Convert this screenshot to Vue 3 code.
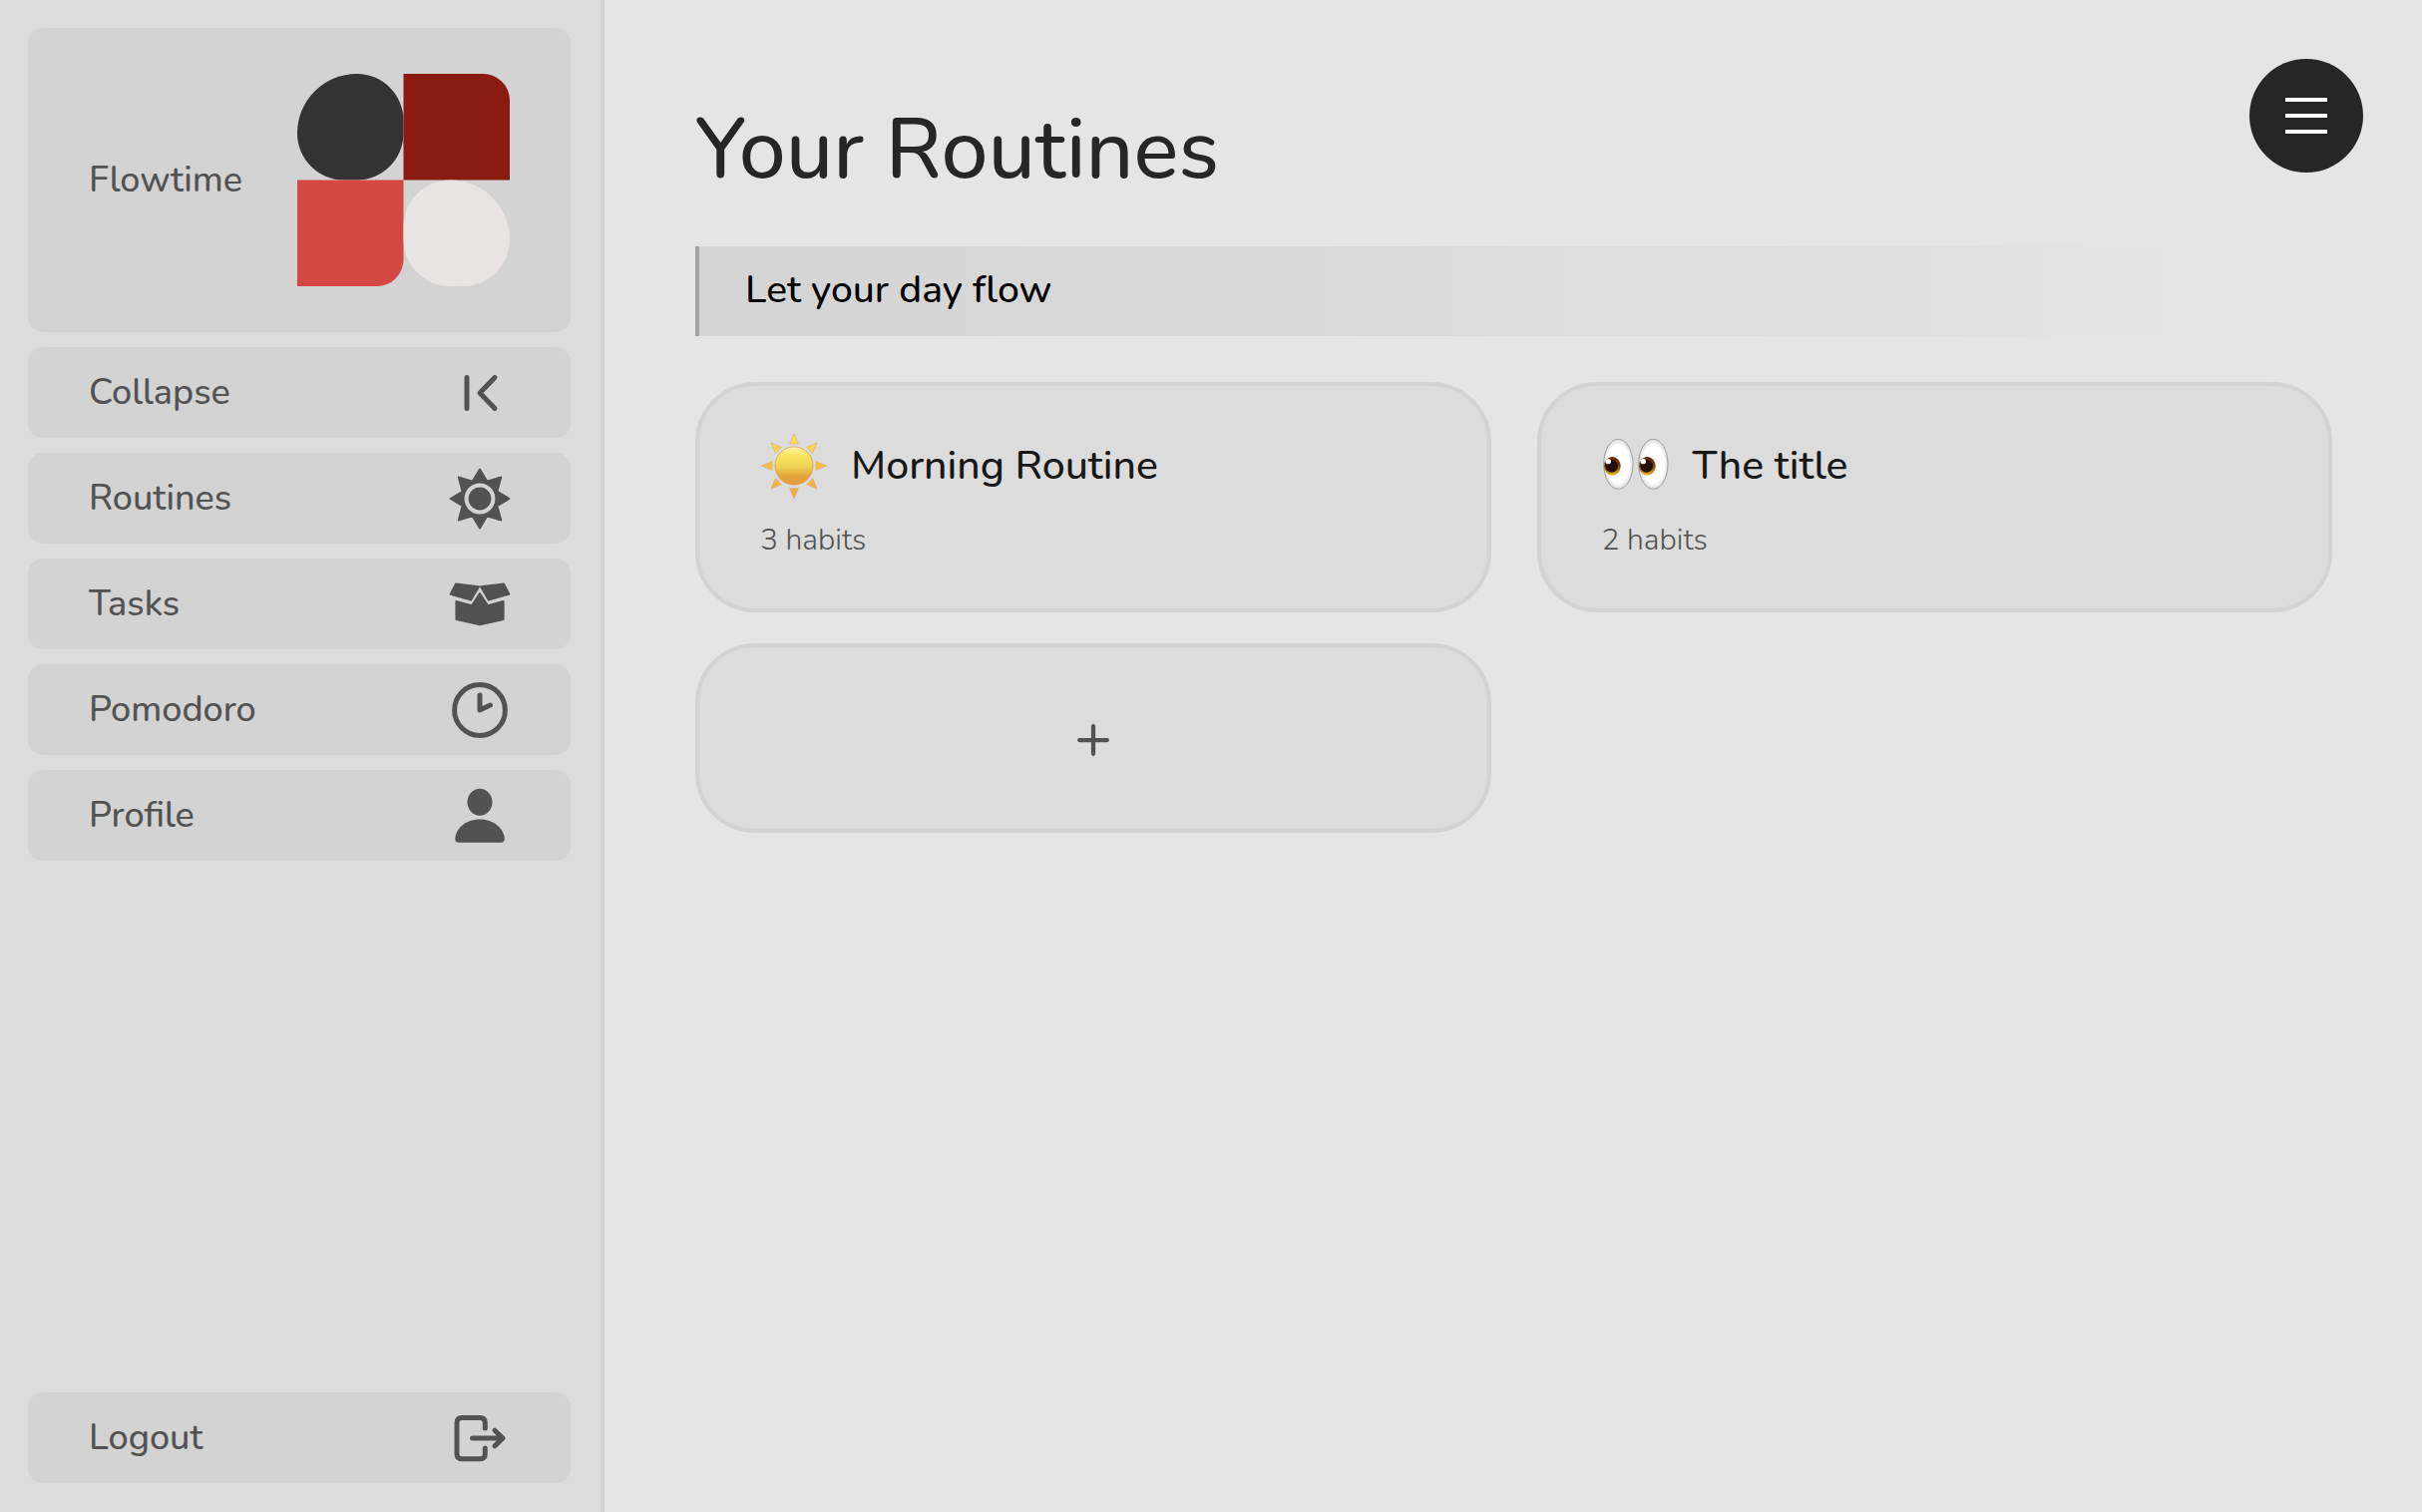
<script setup>
const navItems = [
  { label: 'Collapse', icon: 'collapse', button: true },
  { label: 'Routines', icon: 'sun' },
  { label: 'Tasks', icon: 'box' },
  { label: 'Pomodoro', icon: 'clock' },
  { label: 'Profile', icon: 'person' },
]

const routines = [
  { title: 'Morning Routine', emoji: 'sun', habits: 3 },
  { title: 'The title', emoji: 'eyes', habits: 2 },
]
</script>

<template>
  <div class="app">
    <aside class="sidebar">
      <nav class="nav" aria-label="Main">
        <a class="item brand" href="#">
          <span>Flowtime</span>
          <svg class="logo" viewBox="0 0 214 214" aria-hidden="true">
            <path fill="#333333" d="M60 0A47 47 0 0 1 107 47V60A47 47 0 0 1 60 107H47A47 47 0 0 1 0 60A60 60 0 0 1 60 0Z" />
            <path fill="#8a1b10" d="M107 0H187A27 27 0 0 1 214 27V107H107Z" />
            <path fill="#d34843" d="M0 107H107V187A27 27 0 0 1 80 214H0Z" />
            <path fill="#e8e4e3" d="M154 107A60 60 0 0 1 214 167A47 47 0 0 1 167 214H154A47 47 0 0 1 107 167V154A47 47 0 0 1 154 107Z" />
          </svg>
        </a>

        <component
          :is="item.button ? 'button' : 'a'"
          v-for="item in navItems"
          :key="item.label"
          class="item"
          :type="item.button ? 'button' : undefined"
          :href="item.button ? undefined : '#'"
        >
          <span>{{ item.label }}</span>
          <svg class="icon" viewBox="-31 -31 62 62" aria-hidden="true">
            <g v-if="item.icon === 'collapse'" class="line">
              <path d="M-13 -15.500V15.500M15 -15.500L0 0L15 15.500" />
            </g>
            <g v-else-if="item.icon === 'sun'">
              <path
                class="star"
                d="M0 -29.400L7.200 -17.400L21.200 -21.500L17.400 -7.200L29.400 0L17.400 7.200L21.200 21.500L7.200 17.400L0 29.400L-7.200 17.400L-21.200 21.500L-17.400 7.200L-29.400 0L-17.400 -7.200L-21.200 -21.500L-7.200 -17.400Z"
              />
              <circle class="halo" r="13.400" />
            </g>
            <g v-else-if="item.icon === 'box'" class="solid">
              <path d="M-24 -20.500L-1 -17.700L-8.800 -4.500L-29.300 -10.300Z" />
              <path d="M24 -20.500L1 -17.700L8.800 -4.500L29.300 -10.300Z" />
              <path d="M-23.600 -3L-8 1.200L0 -11L8 1.200L23.600 -3V15L0 20.200L-23.600 15Z" />
            </g>
            <g v-else-if="item.icon === 'clock'" class="line">
              <circle r="25.400" />
              <path d="M0 -15V0L10.500 -5" />
            </g>
            <g v-else>
              <ellipse cy="-13.700" rx="12.500" ry="13.500" />
              <path d="M-21.500 26.700C-23.500 26.700 -24.700 25.500 -24.700 23.500C-24.700 14 -15 3.600 0 3.600S24.700 14 24.700 23.500C24.700 25.500 23.500 26.700 21.500 26.700Z" />
            </g>
          </svg>
        </component>
      </nav>

      <button class="item" type="button">
        <span>Logout</span>
        <svg class="icon" viewBox="-31 -31 62 62" aria-hidden="true">
          <g class="line">
            <path d="M5.300 -10V-15.500Q5.300 -20.500 0.300 -20.500H-18Q-23 -20.500 -23 -15.500V15.800Q-23 20.800 -18 20.800H0.300Q5.300 20.800 5.300 15.800V10" />
            <path d="M-7.500 0H23M15 -7.800L23 0L15 7.800" />
          </g>
        </svg>
      </button>
    </aside>

    <main class="main">
      <h1 class="title">Your Routines</h1>
      <p class="banner">Let your day flow</p>

      <section class="grid">
        <a v-for="routine in routines" :key="routine.title" class="card" href="#">
          <h2 class="card-title">
            <svg v-if="routine.emoji === 'sun'" class="emoji" viewBox="-99 -99 198 198" aria-hidden="true">
              <defs>
                <linearGradient id="rays" gradientUnits="userSpaceOnUse" x1="0" y1="-97" x2="0" y2="97">
                  <stop offset="0" stop-color="#f8e85a" />
                  <stop offset="0.500" stop-color="#f5c048" />
                  <stop offset="1" stop-color="#eeac40" />
                </linearGradient>
                <linearGradient id="disc" x1="0" y1="0" x2="0" y2="1">
                  <stop offset="0" stop-color="#fff6b0" />
                  <stop offset="0.220" stop-color="#fbe560" />
                  <stop offset="0.550" stop-color="#edcf50" />
                  <stop offset="0.780" stop-color="#e5a43c" />
                  <stop offset="1" stop-color="#e59a38" />
                </linearGradient>
              </defs>
              <path
                fill="url(#rays)"
                stroke="#dd9a50"
                stroke-width="1.500"
                d="M0 -96L13 -66H-13ZM0 98L13 68H-13ZM97 0L66 -13V13ZM-97 0L-66 -13V13ZM69 -69L38 -56L56 -38ZM-69 -69L-38 -56L-56 -38ZM69 69L38 56L56 38ZM-69 69L-38 56L-56 38Z"
              />
              <circle r="57" fill="url(#disc)" stroke="#dc8a3c" stroke-width="2" />
            </svg>
            <svg v-else class="emoji" viewBox="382 191 198 198" aria-hidden="true">
              <defs>
                <radialGradient id="ball">
                  <stop offset="0.750" stop-color="#ffffff" />
                  <stop offset="1" stop-color="#dddddd" />
                </radialGradient>
                <linearGradient id="iris" x1="0" y1="0" x2="0" y2="1">
                  <stop offset="0" stop-color="#5a2408" />
                  <stop offset="0.500" stop-color="#80480f" />
                  <stop offset="1" stop-color="#eeb830" />
                </linearGradient>
              </defs>
              <g v-for="x in [0, 105]" :key="x" :transform="`translate(${x} 0)`">
                <ellipse cx="428" cy="285" rx="44" ry="75" fill="url(#ball)" stroke="#a0a0a0" stroke-width="3" />
                <ellipse cx="410" cy="291" rx="25" ry="28" fill="url(#iris)" />
                <circle cx="408" cy="291" r="19" fill="#251003" />
                <circle cx="398" cy="277" r="8" fill="#ffffff" />
              </g>
            </svg>
            <span>{{ routine.title }}</span>
          </h2>
          <p class="habits">{{ routine.habits }} habits</p>
        </a>

        <button class="card add" type="button" aria-label="Add routine">
          <svg class="plus" viewBox="0 0 32 32" aria-hidden="true">
            <path d="M16 3V29M3 16H29" />
          </svg>
        </button>
      </section>
    </main>

    <button class="menu" type="button" aria-label="Open menu">
      <svg class="bars" viewBox="0 0 42 38" aria-hidden="true">
        <path d="M0 3H42M0 19H42M0 35H42" />
      </svg>
    </button>
  </div>
</template>

<style>
body {
  background: #e5e5e5;
}
</style>

<style scoped>
.app {
  display: flex;
  min-height: 100vh;
  position: relative;
  font-family: Nunito, Lato, sans-serif;
  font-weight: 500;
  color: #525252;
}

.sidebar {
  box-sizing: border-box;
  width: 606px;
  flex: none;
  display: flex;
  flex-direction: column;
  justify-content: space-between;
  padding: 28px 30px 29px 28px;
  background: #dcdcdc;
  border-right: 4px solid #d3d3d3;
}

.nav {
  display: flex;
  flex-direction: column;
  gap: 15px;
}

.item {
  box-sizing: border-box;
  width: 100%;
  min-height: 91px;
  display: flex;
  align-items: center;
  justify-content: space-between;
  padding: 0 60px 0 61px;
  border: 0;
  border-radius: 15px;
  background: #d3d3d3;
  color: #525252;
  font-family: inherit;
  font-size: 36px;
  font-weight: inherit;
  line-height: 48px;
  text-align: left;
  text-decoration: none;
}

.brand {
  min-height: 305px;
  padding: 0 61px;
}

.logo {
  width: 213px;
  height: 213px;
}

.icon {
  width: 62px;
  height: 62px;
  fill: #525252;
}

.line {
  fill: none;
  stroke: #525252;
  stroke-width: 5;
  stroke-linecap: round;
  stroke-linejoin: round;
}

.star,
.solid {
  stroke: #525252;
  stroke-width: 2;
  stroke-linejoin: round;
}

.halo {
  fill: none;
  stroke: #d3d3d3;
  stroke-width: 4;
}

.main {
  flex: 1;
  min-width: 0;
  padding: 99px 90px 60px 91px;
}

.title {
  margin: 0 0 44px;
  color: #262626;
  font-size: 84px;
  font-weight: 500;
  line-height: 104px;
}

.banner {
  margin: 0 0 46px;
  padding: 20px 46px 22px;
  border-left: 4px solid #a3a3a3;
  background: linear-gradient(to right, #d4d4d4, #e5e5e5);
  color: #000000;
  font-size: 39px;
  line-height: 48px;
}

.grid {
  display: grid;
  grid-template-columns: repeat(2, minmax(0, 1fr));
  gap: 31px 46px;
}

.card {
  box-sizing: border-box;
  padding: 47px 61px 44px;
  border: 4px solid #d3d3d3;
  border-radius: 60px;
  background: #dcdcdc;
  color: #171717;
  text-decoration: none;
}

.card-title {
  display: flex;
  align-items: center;
  gap: 23px;
  margin: 0 0 18px;
  font-size: 41px;
  font-weight: 500;
  line-height: 48px;
}

.emoji {
  width: 68px;
  height: 66px;
}

.habits {
  margin: 0;
  color: #525252;
  font-size: 30px;
  font-weight: 300;
  line-height: 48px;
}

.add {
  min-height: 190px;
  display: flex;
  align-items: center;
  justify-content: center;
}

.plus {
  width: 34px;
  height: 34px;
  fill: none;
  stroke: #525252;
  stroke-width: 4;
  stroke-linecap: round;
}

.menu {
  position: absolute;
  top: 59px;
  right: 59px;
  width: 114px;
  height: 114px;
  display: flex;
  align-items: center;
  justify-content: center;
  padding: 0;
  border: 0;
  border-radius: 50%;
  background: #262626;
}

.bars {
  width: 42px;
  height: 38px;
  fill: none;
  stroke: #ffffff;
  stroke-width: 4;
}
</style>
